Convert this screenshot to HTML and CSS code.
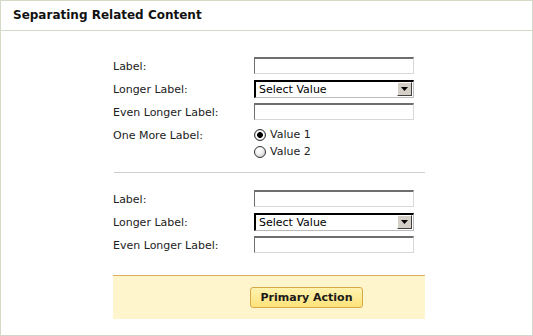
FILE: index.html
```html
<!DOCTYPE html>
<html lang="en">
<head>
    <meta charset="UTF-8">
    <title>Separating Related Content</title>
    <link rel="stylesheet" href="styles.css">
</head>
<body>
    <div class="panel">
        <h1 class="panel-title">Separating Related Content</h1>

        <div class="panel-body">
            <div class="group">
                <label for="a1">Label:</label>
                <input type="text" id="a1" class="field">

                <label for="a2">Longer Label:</label>
                <span class="select-wrap">
                    <select id="a2" class="select"><option>Select Value</option></select>
                    <span class="select-arrow"><svg width="7" height="4" viewBox="0 0 7 4"><path d="M0 0H7L3.5 4Z" fill="#000"/></svg></span>
                </span>

                <label for="a3">Even Longer Label:</label>
                <input type="text" id="a3" class="field">

                <label>One More Label:</label>
                <div class="radios">
                    <label class="radio"><input type="radio" name="r" checked> Value 1</label>
                    <label class="radio"><input type="radio" name="r"> Value 2</label>
                </div>
            </div>

            <hr class="divider">

            <div class="group">
                <label for="b1">Label:</label>
                <input type="text" id="b1" class="field">

                <label for="b2">Longer Label:</label>
                <span class="select-wrap">
                    <select id="b2" class="select"><option>Select Value</option></select>
                    <span class="select-arrow"><svg width="7" height="4" viewBox="0 0 7 4"><path d="M0 0H7L3.5 4Z" fill="#000"/></svg></span>
                </span>

                <label for="b3">Even Longer Label:</label>
                <input type="text" id="b3" class="field">
            </div>

            <div class="actions">
                <button type="button" class="primary">Primary Action</button>
            </div>
        </div>
    </div>
</body>
</html>
```

FILE: styles.css
```css
body {
    margin: 0;
    font-family: "DejaVu Sans", Verdana, sans-serif;
    font-size: 11px;
    color: #222;
    background: #fff;
}

.panel {
    width: 531px;
    height: 334px;
    border: 1px solid #d3dbc6;
    border-bottom-color: #d4d4cc;
    border-right-color: #d4d8cc;
}

.panel-title {
    margin: 0;
    height: 29px;
    line-height: 29px;
    padding-left: 12px;
    font-size: 12px;
    font-weight: bold;
    color: #111;
    border-bottom: 1px solid #d3dbc6;
}

.panel-body {
    width: 312px;
    margin-left: 112px;
    padding-top: 26px;
}

.group {
    display: grid;
    grid-template-columns: 141px 160px;
    grid-auto-rows: 23px;
    align-items: start;
}

.group > label {
    line-height: 17px;
    margin-top: 1px;
}

.field {
    box-sizing: border-box;
    width: 160px;
    height: 17px;
    margin: 0;
    padding: 0 3px;
    border: 1px solid #d8d8d8;
    border-top: 2px solid #6e6e6e;
    border-left: 1px solid #6e6e6e;
    background: #fff;
}

.select-wrap {
    position: relative;
    display: block;
    width: 160px;
    height: 18px;
}

.select {
    -webkit-appearance: none;
    appearance: none;
    box-sizing: border-box;
    width: 160px;
    height: 18px;
    margin: 0;
    padding: 0 0 0 3px;
    border: 1px solid #000;
    border-top-width: 2px;
    border-left-width: 2px;
    border-right-color: #bbb;
    border-bottom-color: #bbb;
    border-radius: 0;
    background: #fff;
    font-family: "DejaVu Sans", Verdana, sans-serif;
    font-size: 11px;
    color: #000;
    line-height: 14px;
}

.select-arrow {
    position: absolute;
    right: 2px;
    top: 2px;
    box-sizing: border-box;
    width: 15px;
    height: 14px;
    display: flex;
    align-items: center;
    justify-content: center;
    background: #d4d0c8;
    border: 1px solid;
    border-color: #fff #404040 #404040 #fff;
}

.radios {
    height: 34px;
    display: flex;
    flex-direction: column;
}

.radio {
    display: flex;
    align-items: center;
    height: 17px;
    gap: 4px;
}

.radio input {
    -webkit-appearance: none;
    appearance: none;
    box-sizing: border-box;
    width: 12px;
    height: 12px;
    margin: 0;
    border: 1px solid #333;
    border-radius: 50%;
    background: radial-gradient(circle at 35% 30%, #fff 0%, #f2f2f2 40%, #bdbdbd 100%);
}

.radio input:checked {
    background: radial-gradient(circle, #000 0 2.6px, #fff 3.2px 4px, #ccc 5px);
}

.group:first-child {
    grid-template-rows: 23px 23px 23px 34px;
}

.divider {
    margin: 12px 0 17px 1px;
    border: 0;
    border-top: 1px solid #cfcfcf;
}

.actions {
    box-sizing: border-box;
    height: 44px;
    margin-top: 16px;
    padding-left: 137px;
    padding-top: 11px;
    border-top: 1px solid #d9ae5c;
    background: #fff5cc;
}

.primary {
    box-sizing: border-box;
    width: 113px;
    height: 21px;
    padding: 0;
    border: 1px solid #d7a84a;
    border-radius: 3px;
    background: linear-gradient(#fff3b0, #fde27a);
    font-family: "DejaVu Sans", Verdana, sans-serif;
    font-size: 11px;
    font-weight: bold;
    color: #1a1a1a;
}
```
